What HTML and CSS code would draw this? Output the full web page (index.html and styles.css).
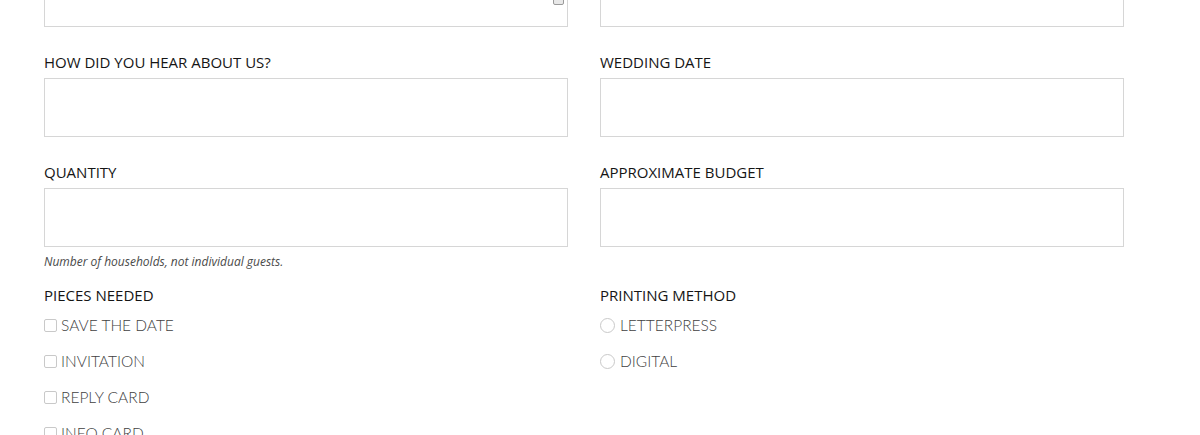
FILE: index.html
```html
<!DOCTYPE html>
<html>
<head>
<meta charset="utf-8">
<link rel="stylesheet" href="styles.css">
</head>
<body>
<form class="form">
  <div class="grid">
    <div class="field">
      <div class="input-wrap">
        <div class="input"></div>
        <span class="input-icon"></span>
      </div>
    </div>
    <div class="field">
      <div class="input"></div>
    </div>

    <div class="field">
      <label class="label">HOW DID YOU HEAR ABOUT US?</label>
      <div class="input"></div>
    </div>
    <div class="field">
      <label class="label">WEDDING DATE</label>
      <div class="input"></div>
    </div>

    <div class="field has-help">
      <label class="label">QUANTITY</label>
      <div class="input"></div>
      <p class="help">Number of households, not individual guests.</p>
    </div>
    <div class="field">
      <label class="label">APPROXIMATE BUDGET</label>
      <div class="input"></div>
    </div>

    <div class="field">
      <label class="label">PIECES NEEDED</label>
      <ul class="options">
        <li class="option"><span class="box"></span>SAVE THE DATE</li>
        <li class="option"><span class="box"></span>INVITATION</li>
        <li class="option"><span class="box"></span>REPLY CARD</li>
        <li class="option"><span class="box"></span>INFO CARD</li>
      </ul>
    </div>
    <div class="field">
      <label class="label">PRINTING METHOD</label>
      <ul class="options">
        <li class="option"><span class="radio"></span>LETTERPRESS</li>
        <li class="option"><span class="radio"></span>DIGITAL</li>
      </ul>
    </div>
  </div>
</form>
</body>
</html>
```
FILE: styles.css
```css
html, body {
  margin: 0;
  padding: 0;
  background: #fff;
  overflow: hidden;
  height: 435px;
}
body {
  font-family: "Open Sans", sans-serif;
  color: #222;
}
.form {
  margin-top: -32px;
  padding-left: 44px;
}
.grid {
  display: grid;
  grid-template-columns: 524px 524px;
  column-gap: 32px;
  align-items: start;
}
.field {
  display: flex;
  flex-direction: column;
  margin-bottom: 25px;
}
.field.has-help {
  margin-bottom: 15px;
}
.label {
  font-size: 15px;
  line-height: 20px;
  color: #151515;
  margin-bottom: 6px;
}
.input-wrap {
  position: relative;
}
.input {
  height: 59px;
  box-sizing: border-box;
  border: 1px solid #d6d6d6;
  background: #fff;
}
.input-icon {
  position: absolute;
  right: 4px;
  top: 26px;
  width: 9px;
  height: 9px;
  border: 1px solid #9a9a9a;
  border-radius: 2px;
  background: #e8e8e8;
}
.help {
  margin: 7px 0 0;
  font-size: 12px;
  line-height: 16px;
  font-style: italic;
  color: #4a4a4a;
}
.options {
  list-style: none;
  margin: -4px 0 0;
  padding: 0;
}
.option {
  height: 36px;
  display: flex;
  align-items: center;
  font-family: Lato, sans-serif;
  font-weight: 300;
  font-size: 15.5px;
  color: #3f3f3f;
}
.box {
  width: 11px;
  height: 11px;
  border: 1px solid #c9c9c9;
  border-radius: 2px;
  margin-right: 4px;
  flex: none;
}
.radio {
  width: 13px;
  height: 13px;
  border: 1px solid #c9c9c9;
  border-radius: 50%;
  margin-right: 5px;
  flex: none;
}
```
